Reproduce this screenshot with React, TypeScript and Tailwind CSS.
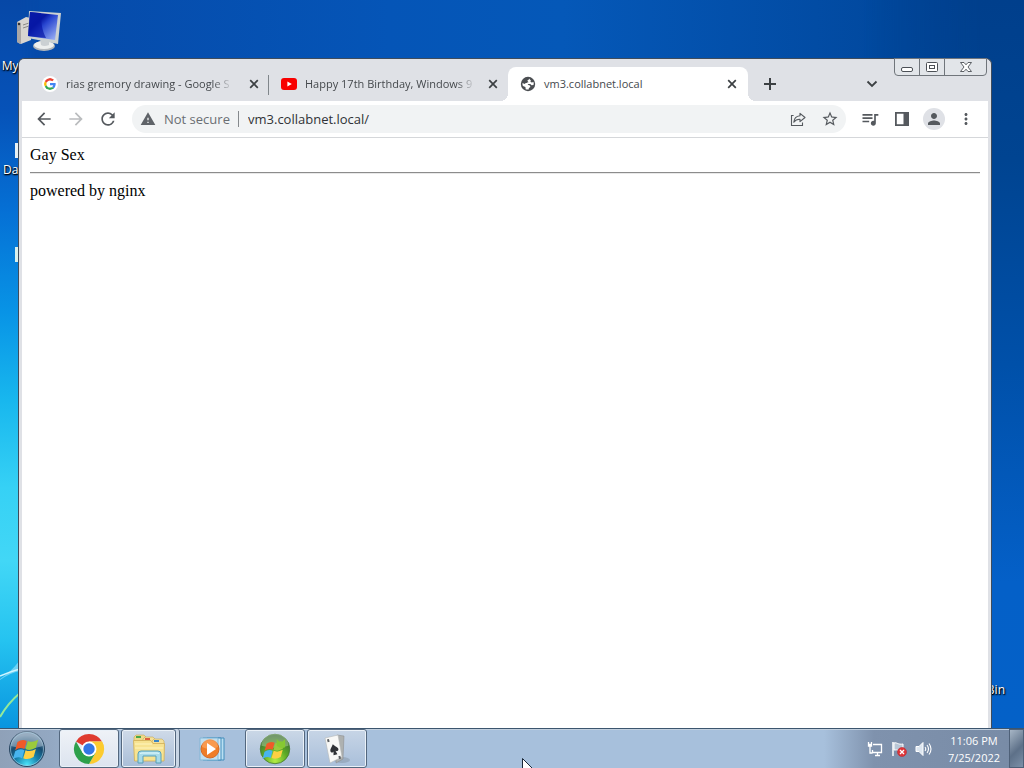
import type { ReactNode } from "react";
import {
  MdArrowBack,
  MdArrowForward,
  MdMoreVert,
  MdPerson,
  MdQueueMusic,
  MdRefresh,
  MdStarBorder,
  MdWarning,
} from "react-icons/md";

function GoogleIcon() {
  return (
    <svg viewBox="0 0 48 48" className="size-4 rounded-full bg-white p-0.5">
      <path fill="#EA4335" d="M24 9.5c3.54 0 6.71 1.22 9.21 3.6l6.85-6.85C35.9 2.38 30.47 0 24 0 14.62 0 6.51 5.38 2.56 13.22l7.98 6.19C12.43 13.72 17.74 9.5 24 9.5z" />
      <path fill="#4285F4" d="M46.98 24.55c0-1.57-.15-3.09-.38-4.55H24v9.02h12.94c-.58 2.96-2.26 5.48-4.78 7.18l7.73 6c4.51-4.18 7.09-10.36 7.09-17.65z" />
      <path fill="#FBBC05" d="M10.53 28.59c-.48-1.45-.76-2.99-.76-4.59s.27-3.14.76-4.59l-7.98-6.19C.92 16.46 0 20.12 0 24c0 3.88.92 7.54 2.56 10.78l7.97-6.19z" />
      <path fill="#34A853" d="M24 48c6.48 0 11.93-2.13 15.89-5.81l-7.73-6c-2.15 1.45-4.92 2.3-8.16 2.3-6.26 0-11.57-4.22-13.47-9.91l-7.98 6.19C6.51 42.62 14.62 48 24 48z" />
    </svg>
  );
}

function YoutubeIcon() {
  return (
    <svg viewBox="0 0 16 16" className="size-4">
      <rect y="2" width="16" height="12" rx="3" fill="#f80000" />
      <path d="M6.4 5.4v5.2L10.8 8z" fill="#fff" />
    </svg>
  );
}

function GlobeIcon() {
  return (
    <svg viewBox="0 0 16 16" className="size-4">
      <circle cx="8" cy="8" r="7.2" fill="#4b4e52" />
      <path d="M9.500 2.400c-.3 1.300-1.700 1-2 2.200-.2.900 1 .9.800 1.700-.3.900-1.500.5-2.500.7L4.600 8 2.500 7c-.2 1 0 2 .4 2.900l2.500 1.200.3 2.100c1 .4 2 .5 3 .3l.2-1.600 1.500-1-.5-1.500-2.300-.6.8-.9 1.900.2 1.200 1.200 2-.3c.3-1 .3-2 0-3l-1.800.6-1.300-.9.5-1.300-1-.8z" fill="#fff" />
    </svg>
  );
}

const tabs = [
  { title: "rias gremory drawing - Google S", icon: <GoogleIcon />, active: false },
  { title: "Happy 17th Birthday, Windows 9", icon: <YoutubeIcon />, active: false },
  { title: "vm3.collabnet.local", icon: <GlobeIcon />, active: true },
];

function Tab({ title, icon, active, divider }: { title: string; icon: ReactNode; active: boolean; divider: boolean }) {
  return (
    <div
      className={
        active
          ? "relative flex h-[34px] w-60 min-w-0 items-center rounded-t-lg bg-white pl-3"
          : "relative flex h-[34px] w-[239px] min-w-0 items-center pl-3"
      }
    >
      {active && (
        <>
          <span className="absolute bottom-0 -left-2 size-2 bg-[radial-gradient(circle_at_0_0,transparent_8px,white_8px)]" />
          <span className="absolute -right-2 bottom-0 size-2 bg-[radial-gradient(circle_at_100%_0,transparent_8px,white_8px)]" />
        </>
      )}
      <span className="size-4 shrink-0">{icon}</span>
      <span className="ml-2 w-[172px] whitespace-nowrap text-[11px] text-[#45494d]">
        <span className={active ? "" : "[mask-image:linear-gradient(to_left,rgb(0_0_0/0.2),black_16px)]"}>{title}</span>
      </span>
      <button aria-label={`Close ${title}`} className="ml-2 flex size-4 shrink-0 items-center justify-center text-[#3c4043]">
        <svg viewBox="0 0 16 16" className="size-4" stroke="currentColor" strokeWidth="1.700">
          <path d="M4.200 4.200l7.600 7.600M11.800 4.200l-7.600 7.600" />
        </svg>
      </button>
      {divider && <span className="absolute top-2 right-0 h-5 w-px bg-[#80868b]" />}
    </div>
  );
}

function ToolButton({ label, children }: { label: string; children: ReactNode }) {
  return (
    <button aria-label={label} className="flex h-7 w-8 shrink-0 items-center justify-center text-[#55595e]">
      {children}
    </button>
  );
}

function ShareIcon() {
  return (
    <svg viewBox="0 0 18 18" className="size-[18px]" fill="none" stroke="currentColor" strokeWidth="1.1">
      <path d="M4.600 5.500H2.500v10h11v-3" />
      <path d="M11 3.300l5 4.200-5 4.200V9.200c-2.800-.1-4.700.8-6.200 3 .3-3.700 2.400-6 6.200-6.400z" strokeLinejoin="round" />
    </svg>
  );
}

function CaptionButtons() {
  return (
    <div className="absolute -top-px right-1 flex h-[18px] rounded-b border border-[#70757b] bg-[#e2e5e9] text-[#4c5056]">
      <button aria-label="Minimize" className="flex w-[25px] items-center justify-center border-r border-[#70757b]">
        <svg viewBox="0 0 14 12" className="h-3 w-3.5" fill="#fff" stroke="currentColor">
          <rect x="1.500" y="6.500" width="11" height="4" rx="1.500" />
        </svg>
      </button>
      <button aria-label="Restore" className="flex w-[25px] items-center justify-center border-r border-[#70757b]">
        <svg viewBox="0 0 14 12" className="h-3 w-3.5" fill="#fff" stroke="currentColor">
          <rect x="1.500" y="1.500" width="11" height="9" rx="1" />
          <rect x="4.500" y="4.500" width="5" height="3" />
        </svg>
      </button>
      <button aria-label="Close" className="flex w-[41px] items-center justify-center">
        <svg viewBox="0 0 14 12" className="h-3 w-3.5" fill="#fff" stroke="currentColor" strokeWidth=".9">
          <path d="M1.500 1.500H5L7 3.800 9 1.500h3.500L9 6l3.500 4.500H9L7 8.200 5 10.500H1.500L5 6z" />
        </svg>
      </button>
    </div>
  );
}

function BrowserWindow() {
  return (
    <section className="absolute top-[58px] right-8 bottom-0 left-[18px] flex flex-col rounded-t-md border border-b-0 border-[#3f4c5c] bg-[#dfe1e6] px-[3px] [text-shadow:none]">
      <div className="flex h-[42px] shrink-0 items-end pl-2">
        {tabs.map((tab, i) => (
          <Tab key={tab.title} {...tab} divider={i === 0} />
        ))}
        <button aria-label="New tab" className="ml-2 flex h-[34px] w-7 shrink-0 items-center justify-center text-[#3c4043]">
          <svg viewBox="0 0 16 16" className="size-4" stroke="currentColor" strokeWidth="2">
            <path d="M8 2v12M2 8h12" />
          </svg>
        </button>
        <button aria-label="Search tabs" className="mr-[102px] ml-auto flex h-[34px] w-7 shrink-0 items-center justify-center text-[#3c4043]">
          <svg viewBox="0 0 12 12" className="size-3" fill="none" stroke="currentColor" strokeWidth="1.800">
            <path d="M1.500 3.500L6 8l4.500-4.500" />
          </svg>
        </button>
      </div>
      <CaptionButtons />

      <div className="flex h-[37px] shrink-0 items-center border-b border-[#d5d7da] bg-white px-1.5">
        <ToolButton label="Back">
          <MdArrowBack className="size-5" />
        </ToolButton>
        <ToolButton label="Forward">
          <MdArrowForward className="size-5 text-[#babcbe]" />
        </ToolButton>
        <ToolButton label="Reload">
          <MdRefresh className="size-5" />
        </ToolButton>
        <div className="mr-2 ml-2 flex h-7 min-w-0 flex-1 items-center rounded-full bg-[#f1f3f4] pl-2">
          <MdWarning className="size-4 shrink-0 text-[#5f6368]" />
          <label htmlFor="address" className="ml-2 w-[75px] shrink-0 border-r border-[#85898d] text-[13px] leading-4 whitespace-nowrap text-[#6a6e73]">
            Not secure
          </label>
          <input
            id="address"
            defaultValue="vm3.collabnet.local/"
            className="ml-[9px] min-w-0 flex-1 bg-transparent text-[13px] text-[#303236] outline-none"
          />
          <ToolButton label="Share this page">
            <ShareIcon />
          </ToolButton>
          <ToolButton label="Bookmark this page">
            <MdStarBorder className="size-[18px]" />
          </ToolButton>
        </div>
        <ToolButton label="Media controls">
          <MdQueueMusic className="size-5" />
        </ToolButton>
        <ToolButton label="Side panel">
          <svg viewBox="0 0 14 14" className="size-3.5" fill="currentColor">
            <path fillRule="evenodd" d="M0 0h14v14H0zM1.800 1.800v10.400h6.700V1.800z" />
          </svg>
        </ToolButton>
        <ToolButton label="Profile">
          <span className="flex size-[22px] items-center justify-center rounded-full bg-[#dfe1e6]">
            <MdPerson className="size-[18px]" />
          </span>
        </ToolButton>
        <ToolButton label="Menu">
          <MdMoreVert className="size-[18px]" />
        </ToolButton>
      </div>

      <main className="flex-1 bg-white p-2 font-['Liberation_Serif',serif] text-base leading-[18px] text-black">
        <p>Gay Sex</p>
        <hr className="my-2 h-0.5 border-t border-b border-t-[#8c8c8c] border-b-[#e8e8e8]" />
        <p>powered by nginx</p>
      </main>
    </section>
  );
}

function ComputerIcon() {
  return (
    <svg viewBox="0 0 48 44" className="h-11 w-12">
      <defs>
        <linearGradient id="screen" x1="0" y1="0" x2="1" y2="1">
          <stop offset="0" stopColor="#0822b0" />
          <stop offset=".35" stopColor="#0618a4" />
          <stop offset=".5" stopColor="#2846d0" />
          <stop offset="1" stopColor="#a8bdf8" />
        </linearGradient>
      </defs>
      <path d="M1 14l9-5 5 1v22L5 36l-4-2z" fill="#d8d5d0" />
      <path d="M1 14l4 1v20l-1 1-3-2z" fill="#aaa7a6" />
      <path d="M7 17l6-2M7 20l6-2" stroke="#8c8a88" />
      <circle cx="3" cy="16" r="1.200" fill="#333" />
      <ellipse cx="28" cy="38" rx="11" ry="5" fill="#b4b8bb" />
      <ellipse cx="28" cy="37" rx="10" ry="4" fill="#edefee" />
      <path d="M24 30l9 2v5q-5 2-8 0z" fill="#cbd0d3" />
      <path d="M13 3l32 2-3 31-30-6z" fill="#cbd1d2" />
      <path d="M14 4l28 3-3 25-27-4z" fill="url(#screen)" />
      <path d="M14 4l11 1c0 10 1 17 5 25l-18-2z" fill="#0717a5" opacity=".7" />
    </svg>
  );
}

function Desktop() {
  return (
    <div className="relative flex-1 overflow-hidden bg-[linear-gradient(to_right,#0649a8_0%,#0555b7_38%,#0558b8_55%,#004497_96%,#003f8c_100%)] text-[12px] leading-4 text-white [text-shadow:0_1px_2px_#000,1px_1px_1px_#000]">
      <div className="absolute inset-y-0 left-0 w-10 bg-[linear-gradient(to_bottom,#0648a7_0%,#0652b8_15%,#0570d5_29%,#0894e6_43%,#18b7ee_55%,#36d1f5_67%,#42d7f6_77%,#25c3f0_88%,#0995df_100%)] [mask-image:linear-gradient(to_right,black_50%,transparent)]" />
      <div className="absolute inset-y-0 right-0 w-40 bg-[linear-gradient(to_bottom,#003f8c_0%,#004491_22%,#0050a9_50%,#0460c8_80%,#0461c8_100%)] [mask-image:linear-gradient(to_left,black_25%,transparent)]" />
      <svg viewBox="0 0 20 80" className="absolute bottom-0 left-0 h-20 w-5" fill="none">
        <path d="M0 31Q11 24 20 12V23Q10 25 0 32z" fill="#bdf0ff" opacity=".5" />
        <path d="M0 28Q12 23 20 21" stroke="#d0f5ff" strokeWidth="1.500" />
        <path d="M0 69Q8 55 20 45" stroke="#94e99b" strokeWidth="2" />
      </svg>

      <div className="absolute top-2 left-0 flex w-20 flex-col items-center gap-1.5">
        <ComputerIcon />
        <span className="whitespace-nowrap">My Computer</span>
      </div>
      <div className="absolute top-[143px] left-[3px] flex flex-col gap-1">
        <span className="ml-3 h-[15px] w-6 bg-[#e8f1f4]" />
        <span>Data</span>
      </div>
      <span className="absolute top-[247px] left-[15px] h-[15px] w-6 bg-[#d9f1ed]" />
      <span className="absolute right-[19px] bottom-[30px] whitespace-nowrap">Recycle Bin</span>
      <BrowserWindow />
    </div>
  );
}

function WindowsFlag() {
  return (
    <g>
      <path d="M10 14q4-3 8-1l-2 7q-4-2-8 1z" fill="#f05a28" />
      <path d="M19 13q4 2 9-1l-2 7q-5 3-9 1z" fill="#9aca3c" />
      <path d="M8 22q4-3 8-1l-2 7q-4-2-8 1z" fill="#48b4ee" />
      <path d="M17 21q4 2 9-1l-2 7q-5 3-9 1z" fill="#ffd044" />
    </g>
  );
}

function StartOrb() {
  return (
    <svg viewBox="0 0 38 38" className="size-[38px]">
      <defs>
        <radialGradient id="orb" cx=".5" cy=".95" r=".85">
          <stop offset="0" stopColor="#4be5fa" />
          <stop offset=".4" stopColor="#1780ab" />
          <stop offset=".7" stopColor="#174c70" />
          <stop offset="1" stopColor="#6e8ba5" />
        </radialGradient>
      </defs>
      <circle cx="19" cy="19" r="17.500" fill="url(#orb)" stroke="#294661" />
      <path d="M3 16a16 15 0 0132 0q-16 5-32 0z" fill="#d6e2ec" opacity="0.4" />
      <g transform="translate(-2 -4) scale(1.15)">
        <WindowsFlag />
      </g>
      <circle cx="19" cy="19" r="16.500" fill="none" stroke="#aacfe3" opacity=".6" />
    </svg>
  );
}

function ChromeIcon() {
  return (
    <svg viewBox="0 0 32 32" className="size-8">
      <path d="M16 16L3 8.500A15 15 0 0129 8.500H16z" fill="#df3b2f" />
      <path d="M16 16l13-7.500A15 15 0 0116 31l6.500-11.200z" fill="#fccb2f" />
      <path d="M22.500 19.800L16 31A15 15 0 013 8.500l6.500 11.300z" fill="#2da04b" />
      <path d="M16 8.500h13q2 3.500 2 7.500l-8.500 3.800z" fill="#fccb2f" />
      <circle cx="16" cy="16" r="7.500" fill="#fff" />
      <circle cx="16" cy="16" r="5.700" fill="#3377e5" />
    </svg>
  );
}

function ExplorerIcon() {
  return (
    <svg viewBox="0 0 34 32" className="h-8 w-[34px]">
      <path d="M2 4l2-2h8l2 2v4H2z" fill="#efd98a" stroke="#c8aa54" strokeWidth=".6" />
      <path d="M11 6l2-2h8l2 2v5H11z" fill="#f4e19b" stroke="#c8aa54" strokeWidth=".6" />
      <path d="M20 8l2-2h8l2 2v5H20z" fill="#f4e19b" stroke="#c8aa54" strokeWidth=".6" />
      <path d="M4 3h5v2H4z" fill="#48a749" />
      <path d="M13 5h5v2h-5z" fill="#dc603d" />
      <path d="M22 7h5v2h-5z" fill="#3885c4" />
      <path d="M1.500 7.500H19l2 3h11.500L32 28H2.500z" fill="#f7e391" stroke="#d0ad55" strokeWidth=".8" />
      <path d="M3 11h17M3 15h28" stroke="#fff5bd" />
      <path d="M6 30V21q0-3 3-3h17q3 0 3 3v9h-5v-7H11v7z" fill="#a8dbe9" stroke="#579fb8" />
      <path d="M8 21q0-1 2-1h15q2 0 2 1" stroke="#e6fcff" fill="none" />
    </svg>
  );
}

function MediaPlayerIcon() {
  return (
    <svg viewBox="0 0 28 28" className="size-7">
      <path d="M9 3h17v22H9z" fill="#b9dff2" stroke="#438dbb" />
      <path d="M5 3h18v22H5z" fill="#d0eaf7" stroke="#438dbb" />
      <path d="M2 3h18v22H2z" fill="#c0dff0" stroke="#82b7d6" />
      <circle cx="12" cy="14" r="9" fill="#ef7d27" stroke="#d46a25" />
      <path d="M4 12a8 8 0 0116 0q-8 4-16 0z" fill="#ffae69" opacity=".6" />
      <path d="M9 8v12l9-6z" fill="#fff" />
    </svg>
  );
}

function GreenOrbIcon() {
  return (
    <svg viewBox="0 0 38 38" className="size-8">
      <defs>
        <radialGradient id="green" cx=".5" cy=".9" r=".85">
          <stop offset="0" stopColor="#b4ee45" />
          <stop offset=".5" stopColor="#5caa26" />
          <stop offset="1" stopColor="#3a6a37" />
        </radialGradient>
      </defs>
      <circle cx="19" cy="19" r="17.500" fill="url(#green)" stroke="#477b36" />
      <path d="M3 15a16 14 0 0132 0q-16 5-32 0z" fill="#e0efce" opacity=".35" />
      <g transform="translate(-3 -4) scale(1.200)">
        <WindowsFlag />
      </g>
      <path d="M21 15V7l3 3h4l3-3v10q-5 2-10-2z" fill="#86c932" />
    </svg>
  );
}

function SolitaireIcon() {
  return (
    <svg viewBox="0 0 30 32" className="h-8 w-[30px]">
      <ellipse cx="20" cy="27" rx="8" ry="3" fill="#8595a5" opacity=".5" />
      <path d="M15 2l7 1-1 23-7 4z" fill="#aeb1b0" stroke="#888" strokeWidth=".5" />
      <path d="M3 5l13-3 4 22-12 6z" fill="#f8f8f6" stroke="#b6b8b8" strokeWidth=".6" />
      <g transform="rotate(-14 12 16)">
        <path d="M12 11c-2 3-4 4-4 6 0 2 2 3 3 1l-1 4h4l-1-4c2 2 4 0 3-2-1-2-3-3-4-5z" fill="#303236" />
        <path d="M8 5v3m1-3v3M15 24v3m1-3v3" stroke="#5a5d60" />
      </g>
    </svg>
  );
}

const apps = [
  { name: "Google Chrome", icon: <ChromeIcon />, box: "ml-1.5 w-[60px] bg-[linear-gradient(#eff2f7,#dce4ef)]", open: true },
  { name: "Windows Explorer", icon: <ExplorerIcon />, box: "ml-0.5 w-[55px] bg-[linear-gradient(#cfdae8,#a9bed8)]", open: true, stacked: true },
  { name: "Windows Media Player", icon: <MediaPlayerIcon />, box: "ml-0.5 w-[60px]", open: false },
  { name: "Windows", icon: <GreenOrbIcon />, box: "ml-[3px] w-[60px] bg-[linear-gradient(#cbd8e7,#a6bcd7)]", open: true },
  { name: "Solitaire", icon: <SolitaireIcon />, box: "ml-0.5 w-[60px] bg-[linear-gradient(#c7d5e6,#a9bfda)]", open: true },
];

function Taskbar() {
  return (
    <footer className="flex h-10 shrink-0 border-t border-[#3c556e] bg-[linear-gradient(to_right,#8fa1b8_0,#93a8c2_50px,#a7c0dc_130px,#a7c0dc_calc(100%-200px),#7f92ad_calc(100%-150px),#788ba6_100%)] shadow-[inset_0_1px_0_#c2d0df]">
      <button aria-label="Start" className="ml-2 flex w-[38px] shrink-0 items-center justify-center">
        <StartOrb />
      </button>
      <nav className="ml-[7px] flex">
        {apps.map((app) => (
          <div key={app.name} className="flex">
            <button
              aria-label={app.name}
              className={`flex h-[39px] items-center justify-center rounded-[3px] ${app.box} ${
                app.open ? "border border-[#53677e] shadow-[inset_0_0_0_1px_#eaf1f8]" : ""
              }`}
            >
              {app.icon}
            </button>
            {app.stacked && (
              <span className="h-[39px] w-1 rounded-r-[3px] border-r border-[#53677e] bg-[#c9d6e5]" />
            )}
          </div>
        ))}
      </nav>
      <div className="ml-auto flex items-center text-white">
        <button aria-label="Network" className="flex w-6 justify-center">
          <svg viewBox="0 0 16 16" className="size-4" fill="none" stroke="#fff" strokeWidth="1.300">
            <path d="M6 3.500h8.500v8H5.500V9M8 14.500h5M10.500 12v2" />
            <path d="M1.500 1v4h3V1M3 5v7h2.500M1 3.500h4" />
          </svg>
        </button>
        <button aria-label="Action Center" className="flex w-6 justify-center">
          <svg viewBox="0 0 18 18" className="size-[18px]">
            <path d="M3 2v14" stroke="#fff" strokeWidth="1.500" />
            <path d="M4 3c3-1 4 2 9 1v7c-4 1-5-2-9-1z" fill="#b8c6d6" stroke="#fff" />
            <circle cx="12" cy="12" r="4.500" fill="#df3639" stroke="#b72a32" strokeWidth=".6" />
            <path d="M10 10l4 4m0-4l-4 4" stroke="#fff" strokeWidth="1.300" />
          </svg>
        </button>
        <button aria-label="Volume" className="flex w-6 justify-center">
          <svg viewBox="0 0 18 18" className="size-[18px]" fill="none" stroke="#fff">
            <path d="M2 6.500h3l4-4v13l-4-4H2z" fill="#dce5ef" />
            <path d="M11 7q1.500 2 0 4M13 5q3 4 0 8M15 3.500q4 5.500 0 11" strokeWidth="1.100" />
          </svg>
        </button>
        <button className="ml-2 w-[62px] text-center text-[11px] leading-[17px] whitespace-nowrap">
          11:06 PM
          <br />
          7/25/2022
        </button>
        <button
          aria-label="Show desktop"
          className="ml-1 h-full w-[15px] border border-[#4e6078] bg-[linear-gradient(135deg,#a7b6c6,#5d7088_55%,#7c90a8)]"
        />
      </div>
    </footer>
  );
}

export default function App() {
  return (
    <div className="relative flex h-screen flex-col overflow-hidden font-['Open_Sans',sans-serif]">
      <Desktop />
      <Taskbar />
      <svg viewBox="0 0 12 19" className="pointer-events-none absolute top-[758px] left-[522px] h-[19px] w-3">
        <path d="M.5.5v16l4-4 3 6 2-1-3-6h5z" fill="#fff" stroke="#1b2838" />
      </svg>
    </div>
  );
}
